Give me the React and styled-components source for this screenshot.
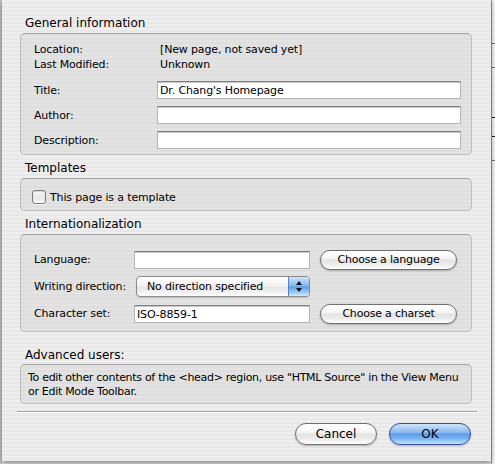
import React from "react";
import styled, { createGlobalStyle } from "styled-components";

const GlobalStyle = createGlobalStyle`
  html, body { margin: 0; padding: 0; }
  body {
    width: 495px;
    height: 464px;
    overflow: hidden;
    background: #cfcfcf;
    font-family: "DejaVu Sans", "Noto Sans", sans-serif;
    color: #000;
  }
`;

const Desktop = styled.div`
  display: flex;
  width: 495px;
  height: 464px;
  background: linear-gradient(to right, #c4c4c4 0 2px, #e9e9e9 2px);
`;

const BehindWindow = styled.div`
  flex: 1;
  height: 464px;
  border-left: 1px solid #9a9a9a;
  background:
    linear-gradient(#777, #777) 0 43px / 100% 1px no-repeat,
    linear-gradient(#777, #777) 0 67px / 100% 1px no-repeat,
    linear-gradient(#222, #222) 0 117px / 100% 1px no-repeat,
    linear-gradient(#222, #222) 0 136px / 100% 1px no-repeat,
    linear-gradient(#777, #777) 0 160px / 100% 1px no-repeat,
    #f4f4f4;
`;

const Dialog = styled.div`
  flex: none;
  position: relative;
  z-index: 1;
  width: 489px;
  height: 461px;
  margin-left: 2px;
  box-sizing: border-box;
  padding: 16px 19px 0 18px;
  display: flex;
  flex-direction: column;
  background: repeating-linear-gradient(to bottom, #eeeeee 0 2px, #e8e8e8 2px 4px);
  box-shadow: 0 2px 5px rgba(0, 0, 0, 0.45);
`;

const SectionTitle = styled.div`
  font-size: 12px;
  line-height: 15px;
  padding-left: 5px;
  margin-top: ${(p) => p.$mt || 0}px;
  margin-bottom: ${(p) => (p.$mb === undefined ? 2 : p.$mb)}px;
  white-space: nowrap;
`;

const GroupBox = styled.div`
  border: 1px solid #bdbdbd;
  border-top-color: #a2a2a2;
  border-radius: 5px;
  background: rgba(0, 0, 0, 0.045);
  padding: ${(p) => p.$pad};
  display: flex;
  flex-direction: ${(p) => (p.$row ? "row" : "column")};
  align-items: ${(p) => (p.$row ? "center" : "stretch")};
  gap: ${(p) => p.$gap || 0}px;
`;

const Row = styled.div`
  display: flex;
  align-items: center;
  height: ${(p) => p.$h}px;
  margin-top: ${(p) => p.$mt || 0}px;
  font-size: 11px;
  letter-spacing: -0.15px;
`;

const Label = styled.div`
  flex: none;
  width: ${(p) => p.$w}px;
  white-space: nowrap;
`;

const Value = styled.div`
  padding-left: 3px;
  white-space: nowrap;
`;

const TextField = styled.div`
  box-sizing: border-box;
  height: 18px;
  flex: ${(p) => (p.$w ? "none" : "1")};
  width: ${(p) => (p.$w ? `${p.$w}px` : "auto")};
  background: #fff;
  border: 1px solid #b4b4b4;
  border-top: 1px solid #7e7e7e;
  box-shadow: inset 0 1px 0 #c8c8c8;
  padding: 1px 0 0 2px;
  line-height: 15px;
  white-space: nowrap;
`;

const CheckBox = styled.div`
  flex: none;
  box-sizing: border-box;
  width: 14px;
  height: 14px;
  border: 1px solid #7c7c7c;
  border-radius: 3px;
  background: linear-gradient(#fbfbfb, #e6e6e6 50%, #f0f0f0 80%, #ffffff);
  box-shadow: inset 0 1px 1px rgba(0, 0, 0, 0.15), 0 1px 0 rgba(255, 255, 255, 0.6);
`;

const CheckLabel = styled.span`
  font-size: 11px;
  letter-spacing: -0.15px;
  white-space: nowrap;
`;

const PopUp = styled.div`
  flex: none;
  box-sizing: border-box;
  width: 174px;
  height: 21px;
  margin-left: 2px;
  display: flex;
  border: 1px solid #8a8a8a;
  border-radius: 4px;
  overflow: hidden;
  background: linear-gradient(#ffffff, #f3f3f3 45%, #e6e6e6 55%, #f7f7f7 90%, #ffffff);
  box-shadow: 0 1px 1px rgba(0, 0, 0, 0.15);
`;

const PopUpText = styled.div`
  flex: 1;
  padding-left: 10px;
  line-height: 19px;
  white-space: nowrap;
`;

const PopUpArrows = styled.div`
  flex: none;
  width: 20px;
  display: flex;
  align-items: center;
  justify-content: center;
  border-left: 1px solid #5b7fc0;
  background: linear-gradient(#d0e4fb, #86b8ef 45%, #5d9fe8 52%, #9fd0fa 85%, #d4efff);
`;

const PushButton = styled.div`
  flex: none;
  box-sizing: border-box;
  width: ${(p) => p.$w}px;
  height: ${(p) => p.$h}px;
  margin-left: ${(p) => p.$ml || 0}px;
  border: 1px solid ${(p) => (p.$primary ? "#34509a" : "#6f6f6f")};
  border-radius: ${(p) => p.$h / 2}px;
  display: flex;
  align-items: center;
  justify-content: center;
  font-size: ${(p) => p.$fs}px;
  letter-spacing: ${(p) => (p.$fs < 12 ? "-0.2px" : "0")};
  white-space: nowrap;
  color: #000;
  background: ${(p) =>
    p.$primary
      ? "linear-gradient(#cfe4fb, #8fbcf0 40%, #5c9be6 52%, #7db8f2 75%, #c2e6ff)"
      : "linear-gradient(#ffffff, #f6f6f6 40%, #e3e3e3 52%, #ececec 75%, #ffffff)"};
  box-shadow: 0 1px 2px rgba(0, 0, 0, 0.25);
`;

const InfoText = styled.div`
  font-size: 11px;
  line-height: 14px;
  letter-spacing: -0.3px;
  white-space: nowrap;
`;

const Separator = styled.div`
  height: 1px;
  margin: 7px -5px 0 -3px;
  background: #a6a6a6;
  box-shadow: 0 1px 0 rgba(255, 255, 255, 0.7);
`;

const Footer = styled.div`
  display: flex;
  justify-content: flex-end;
  gap: 12px;
  margin: 11px 1px 0 0;
`;

function Arrows() {
  return (
    <svg width="8" height="13" viewBox="0 0 8 13">
      <path d="M4 1 L7 5 L1 5 Z" fill="#111" />
      <path d="M4 12 L7 8 L1 8 Z" fill="#111" />
    </svg>
  );
}

export default function App() {
  return (
    <>
      <GlobalStyle />
      <Desktop>
        <Dialog>
          <SectionTitle>General information</SectionTitle>
          <GroupBox $pad="8px 10px 5px 13px">
            <Row $h={15}>
              <Label $w={123}>Location:</Label>
              <Value>[New page, not saved yet]</Value>
            </Row>
            <Row $h={15}>
              <Label $w={123}>Last Modified:</Label>
              <Value>Unknown</Value>
            </Row>
            <Row $h={18} $mt={9}>
              <Label $w={123}>Title:</Label>
              <TextField>Dr. Chang's Homepage</TextField>
            </Row>
            <Row $h={18} $mt={7}>
              <Label $w={123}>Author:</Label>
              <TextField />
            </Row>
            <Row $h={18} $mt={7}>
              <Label $w={123}>Description:</Label>
              <TextField />
            </Row>
          </GroupBox>

          <SectionTitle $mt={6}>Templates</SectionTitle>
          <GroupBox $row $gap={4} $pad="11px 12px 6px 11px">
            <CheckBox />
            <CheckLabel>This page is a template</CheckLabel>
          </GroupBox>

          <SectionTitle $mt={6}>Internationalization</SectionTitle>
          <GroupBox $gap={6} $pad="14px 14px 7px 13px">
            <Row $h={21}>
              <Label $w={100}>Language:</Label>
              <TextField $w={176} />
              <PushButton $w={137} $h={20} $ml={10} $fs={11}>
                Choose a language
              </PushButton>
            </Row>
            <Row $h={21}>
              <Label $w={100}>Writing direction:</Label>
              <PopUp>
                <PopUpText>No direction specified</PopUpText>
                <PopUpArrows>
                  <Arrows />
                </PopUpArrows>
              </PopUp>
            </Row>
            <Row $h={21}>
              <Label $w={100}>Character set:</Label>
              <TextField $w={176}>ISO-8859-1</TextField>
              <PushButton $w={137} $h={20} $ml={10} $fs={11}>
                Choose a charset
              </PushButton>
            </Row>
          </GroupBox>

          <SectionTitle $mt={16} $mb={1}>
            Advanced users:
          </SectionTitle>
          <GroupBox $pad="6px 8px 4px 7px">
            <InfoText>
              To edit other contents of the &lt;head&gt; region, use "HTML Source" in the View Menu
              <br />
              or Edit Mode Toolbar.
            </InfoText>
          </GroupBox>

          <Separator />
          <Footer>
            <PushButton $w={82} $h={22} $fs={12}>
              Cancel
            </PushButton>
            <PushButton $w={82} $h={22} $fs={12} $primary>
              OK
            </PushButton>
          </Footer>
        </Dialog>
        <BehindWindow />
      </Desktop>
    </>
  );
}
